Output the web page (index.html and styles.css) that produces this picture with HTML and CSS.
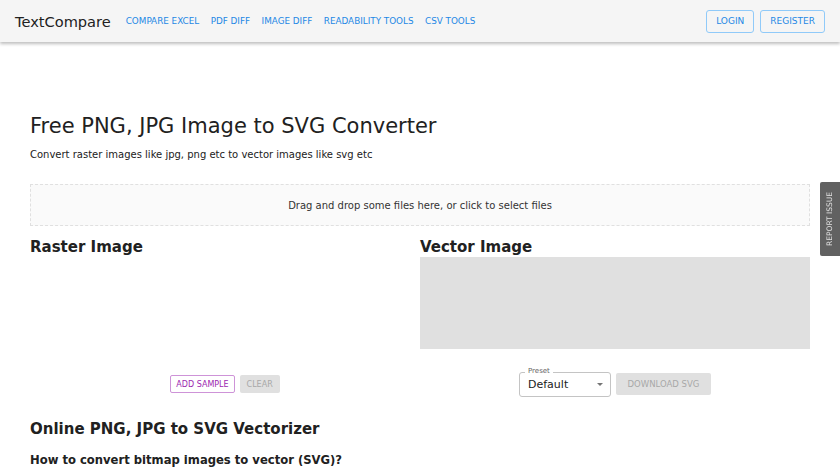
FILE: index.html
```html
<!DOCTYPE html>
<html lang="en">
<head>
    <meta charset="UTF-8">
    <title>Free PNG, JPG Image to SVG Converter</title>
    <link rel="stylesheet" href="styles.css">
</head>
<body>
    <header class="topbar">
        <a class="logo" href="#">TextCompare</a>
        <nav class="nav">
            <a href="#">Compare Excel</a>
            <a href="#">PDF Diff</a>
            <a href="#">Image Diff</a>
            <a href="#">Readability Tools</a>
            <a href="#">CSV Tools</a>
        </nav>
        <div class="auth">
            <button class="btn-outline">Login</button>
            <button class="btn-outline">Register</button>
        </div>
    </header>

    <main class="page">
        <h1>Free PNG, JPG Image to SVG Converter</h1>
        <p class="lead">Convert raster images like jpg, png etc to vector images like svg etc</p>

        <div class="dropzone">Drag and drop some files here, or click to select files</div>

        <div class="columns">
            <section class="col">
                <h2>Raster Image</h2>
                <div class="raster-box"></div>
                <div class="actions">
                    <button class="btn-sample">Add Sample</button>
                    <button class="btn-disabled">Clear</button>
                </div>
            </section>
            <section class="col">
                <h2>Vector Image</h2>
                <div class="vector-box"></div>
                <div class="actions">
                    <div class="select">
                        <span class="select-label">Preset</span>
                        <span class="select-value">Default</span>
                        <span class="caret"></span>
                    </div>
                    <button class="btn-disabled btn-download">Download SVG</button>
                </div>
            </section>
        </div>

        <h2 class="section-title">Online PNG, JPG to SVG Vectorizer</h2>
        <h3>How to convert bitmap images to vector (SVG)?</h3>
    </main>

    <div class="report">Report Issue</div>
</body>
</html>
```

FILE: styles.css
```css
body {
    margin: 0;
    font-family: "DejaVu Sans", sans-serif;
    color: #212121;
    background: #fff;
}

.topbar {
    display: flex;
    align-items: center;
    height: 42px;
    padding: 0 15px;
    background: #f5f5f5;
    box-shadow: 0 2px 3px rgba(0, 0, 0, 0.25);
}

.logo {
    font-size: 14.6px;
    color: #212121;
    text-decoration: none;
    margin-right: 15px;
}

.nav {
    display: flex;
    gap: 11.5px;
    flex: 1;
}

.nav a {
    font-size: 8.8px;
    text-transform: uppercase;
    color: #1e88e5;
    text-decoration: none;
}

.auth {
    display: flex;
    gap: 6px;
}

.btn-outline {
    font-family: inherit;
    font-size: 9px;
    text-transform: uppercase;
    color: #1e88e5;
    background: transparent;
    border: 1px solid #90caf9;
    border-radius: 3px;
    height: 23px;
    padding: 0 9px;
}

.page {
    padding: 70px 30px 0;
}

h1 {
    font-size: 21px;
    font-weight: normal;
    margin: 0;
    line-height: 28px;
}

.lead {
    font-size: 10px;
    margin: 7px 0 0;
    line-height: 16px;
}

.dropzone {
    margin-top: 21px;
    height: 40px;
    display: flex;
    align-items: center;
    justify-content: center;
    font-size: 10px;
    color: #333;
    background: #fafafa;
    border: 1px dashed #e0e0e0;
}

.columns {
    display: grid;
    grid-template-columns: 1fr 1fr;
}

h2 {
    font-size: 15px;
    margin: 11px 0 0;
    line-height: 20px;
}

.raster-box {
    height: 92px;
}

.vector-box {
    height: 92px;
    background: #e0e0e0;
}

.actions {
    display: flex;
    justify-content: center;
    align-items: center;
    gap: 5px;
    margin-top: 22px;
    height: 26px;
}

.btn-sample {
    font-family: inherit;
    font-size: 8px;
    text-transform: uppercase;
    color: #9c27b0;
    background: #fff;
    border: 1px solid #ce93d8;
    border-radius: 2px;
    height: 18px;
    padding: 0 5px;
}

.btn-disabled {
    font-family: inherit;
    font-size: 8px;
    text-transform: uppercase;
    color: #a8a8a8;
    background: #e0e0e0;
    border: none;
    border-radius: 2px;
    height: 18px;
    padding: 0 6px;
    width: 40px;
}

.btn-download {
    height: 22px;
    width: 95px;
    font-size: 8.5px;
}

.select {
    position: relative;
    border: 1px solid #c4c4c4;
    border-radius: 3px;
    display: flex;
    align-items: center;
    padding-left: 8px;
    box-sizing: border-box;
    width: 92px;
    height: 25px;
}

.select-label {
    position: absolute;
    top: -6px;
    left: 5px;
    padding: 0 3px;
    background: #fff;
    font-size: 7px;
    color: #666;
}

.select-value {
    font-size: 11px;
}

.caret {
    position: absolute;
    right: 7px;
    top: 10px;
    border-left: 3px solid transparent;
    border-right: 3px solid transparent;
    border-top: 3px solid #757575;
}

.section-title {
    margin-top: 22px;
}

h3 {
    font-size: 11.6px;
    margin: 14px 0 0;
}

.report {
    position: fixed;
    right: 0;
    top: 182px;
    width: 20px;
    height: 74px;
    background: #616161;
    color: #e0e0e0;
    font-size: 7.5px;
    writing-mode: vertical-rl;
    transform: rotate(180deg);
    text-transform: uppercase;
    display: flex;
    align-items: center;
    justify-content: center;
    border-radius: 0 2px 2px 0;
}
```
